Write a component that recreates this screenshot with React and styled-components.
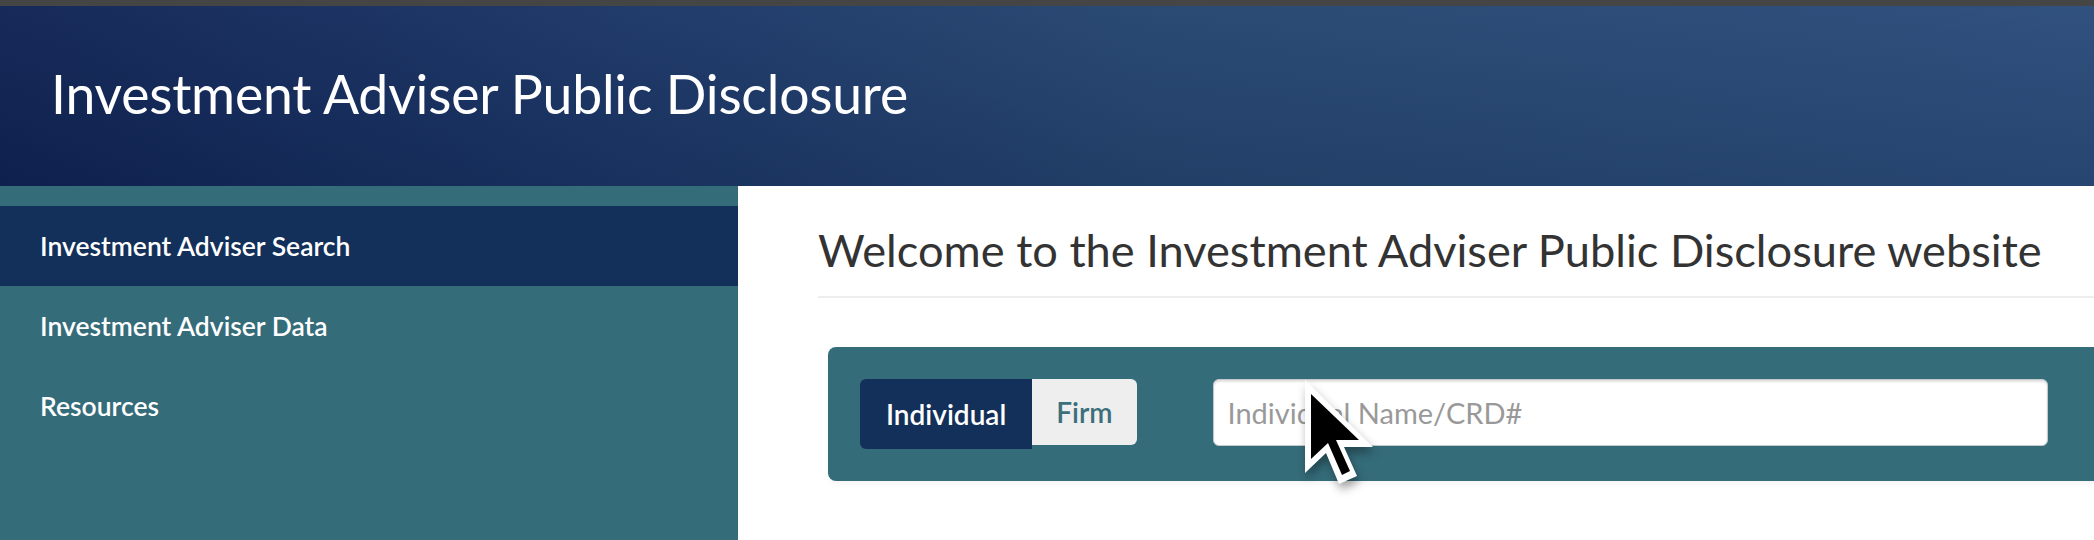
import React from "react";
import styled, { createGlobalStyle } from "styled-components";

const GlobalStyle = createGlobalStyle`
	html, body {
		margin: 0;
		padding: 0;
		background: #ffffff;
		overflow: hidden;
	}
	body {
		font-family: Lato, "Noto Sans", sans-serif;
	}
`;

const Page = styled.div`
	position: relative;
	width: 100%;
	min-height: 540px;
	overflow: hidden;
`;

const TopStrip = styled.div`
	height: 6px;
	background-color: #454545;
`;

const Header = styled.header`
	height: 180px;
	box-sizing: border-box;
	padding: 55px 0 0 51px;
	background:
		linear-gradient(to bottom, rgba(255, 255, 255, 0.03), rgba(0, 0, 0, 0.08)),
		linear-gradient(to right, #0f2354 0%, #1a3566 30%, #24446f 55%, #2a4b7a 100%);
`;

const HeaderTitle = styled.h1`
	margin: 0;
	font-size: 53.5px;
	line-height: 1.2;
	font-weight: 400;
	letter-spacing: -0.2px;
	color: #ffffff;
`;

const Body = styled.div`
	display: flex;
	min-height: 354px;
`;

const Sidebar = styled.nav`
	flex: 0 0 738px;
	background-color: #356c7a;
	padding-top: 20px;
	box-sizing: border-box;
`;

const NavItem = styled.div`
	height: 80px;
	display: flex;
	align-items: center;
	padding-left: 40px;
	font-size: 26.5px;
	font-weight: 600;
	color: #ffffff;
	background-color: ${(props) => (props.active ? "#13305a" : "transparent")};
`;

const Main = styled.main`
	flex: 1;
	padding-left: 80px;
	overflow: hidden;
`;

const Title = styled.h2`
	margin: 37px 0 0;
	font-size: 45.2px;
	line-height: 1.2;
	font-weight: 400;
	color: #333333;
	white-space: nowrap;
`;

const Rule = styled.div`
	height: 2px;
	margin-top: 19px;
	background-color: #eeeeee;
`;

const SearchPanel = styled.div`
	margin: 49px 0 0 10px;
	width: 1400px;
	padding: 32px;
	box-sizing: border-box;
	display: flex;
	align-items: flex-start;
	gap: 76px;
	background-color: #356c7a;
	border-radius: 8px 0 0 8px;
	box-shadow: 0 3px 5px rgba(0, 0, 0, 0.04);
`;

const Toggle = styled.div`
	display: flex;
	align-items: flex-start;
`;

const ToggleButton = styled.button`
	height: ${(props) => (props.active ? "70px" : "66px")};
	padding: 0 ${(props) => (props.active ? "26px" : "24px")};
	border: none;
	font-family: Lato, "Noto Sans", sans-serif;
	font-size: 28px;
	font-weight: 600;
	color: ${(props) => (props.active ? "#ffffff" : "#3d6e7b")};
	background-color: ${(props) => (props.active ? "#13305a" : "#eeeeee")};
	border-radius: ${(props) => (props.active ? "6px 0 0 6px" : "0 6px 6px 0")};
	cursor: pointer;
`;

const SearchInput = styled.input`
	width: 835px;
	height: 67px;
	box-sizing: border-box;
	padding: 0 14px;
	border: 1px solid #c4c9cc;
	border-radius: 6px;
	box-shadow: inset 0 2px 2px rgba(0, 0, 0, 0.12);
	font-family: Lato, "Noto Sans", sans-serif;
	font-size: 29px;
	color: #333333;
	background: #ffffff;
	outline: none;

	&::placeholder {
		color: #999999;
	}
`;

const Cursor = styled.svg`
	position: absolute;
	left: 1302px;
	top: 377px;
	width: 80px;
	height: 116px;
	filter: drop-shadow(2px 6px 5px rgba(0, 0, 0, 0.35));
	pointer-events: none;
`;

export default function App() {
	return (
		<Page>
			<GlobalStyle />
			<TopStrip />
			<Header>
				<HeaderTitle>Investment Adviser Public Disclosure</HeaderTitle>
			</Header>
			<Body>
				<Sidebar>
					<NavItem active>Investment Adviser Search</NavItem>
					<NavItem>Investment Adviser Data</NavItem>
					<NavItem>Resources</NavItem>
				</Sidebar>
				<Main>
					<Title>Welcome to the Investment Adviser Public Disclosure website</Title>
					<Rule />
					<SearchPanel>
						<Toggle>
							<ToggleButton active>Individual</ToggleButton>
							<ToggleButton>Firm</ToggleButton>
						</Toggle>
						<SearchInput placeholder="Individual Name/CRD#" />
					</SearchPanel>
				</Main>
			</Body>
			<Cursor viewBox="-3 -3 80 116">
				<path
					d="M0 0 L0 93 L21 73 L34 104 L52 96 L39 67 L68 67 Z"
					fill="#ffffff"
				/>
				<path
					d="M6 14 L6 79 L23 63 L37 95 L45 91 L31 60 L54 60 Z"
					fill="#000000"
				/>
			</Cursor>
		</Page>
	);
}
